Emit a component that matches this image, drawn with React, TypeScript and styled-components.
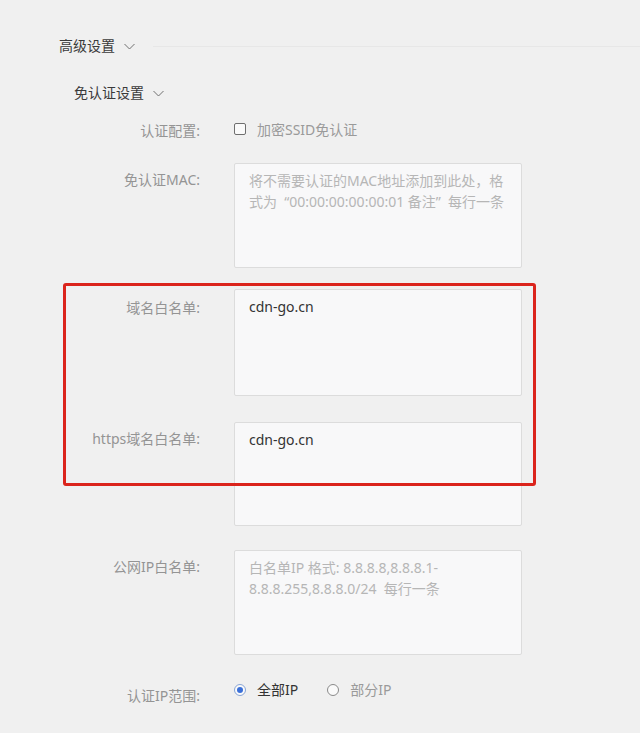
import React from "react";
import styled, { createGlobalStyle } from "styled-components";

const GlobalStyle = createGlobalStyle`
  html, body {
    margin: 0;
    padding: 0;
    background: #f0f0f0;
  }
  body {
    font-family: "Noto Sans", "Noto Sans CJK SC", sans-serif;
    font-size: 14px;
  }
  *, *::before, *::after { box-sizing: border-box; }
`;

const Page = styled.div`
  width: 640px;
  height: 733px;
  overflow: hidden;
  background: #f0f0f0;
  padding: 36px 0 0 59px;
`;

const SectionHeader = styled.div<{ $indent?: number; $top?: number }>`
  display: flex;
  align-items: center;
  height: 20px;
  margin-left: ${(p) => p.$indent ?? 0}px;
  margin-top: ${(p) => p.$top ?? 0}px;
  color: #3a3a3a;
  font-size: 14px;
  line-height: 20px;
`;

const HeaderTitle = styled.span`
  white-space: nowrap;
`;

const Chevron = styled.svg`
  margin-left: 9px;
  flex: none;
`;

const Rule = styled.div`
  flex: 1;
  height: 1px;
  margin-left: 18px;
  background: #e7e7e7;
`;

const Form = styled.div`
  display: flex;
  flex-direction: column;
  margin-top: 17px;
`;

const Row = styled.div<{ $top?: number }>`
  display: grid;
  grid-template-columns: 141px 288px;
  column-gap: 34px;
  align-items: start;
  margin-top: ${(p) => p.$top ?? 0}px;
`;

const Label = styled.div<{ $offset?: number }>`
  text-align: right;
  color: #949494;
  font-size: 14px;
  line-height: 20px;
  padding-top: ${(p) => p.$offset ?? 0}px;
  white-space: nowrap;
`;

const Inline = styled.label`
  display: flex;
  align-items: center;
  height: 20px;
  font-size: 14px;
  line-height: 20px;
`;

const CheckBox = styled.span`
  width: 12px;
  height: 12px;
  border: 1px solid #6f6f6f;
  border-radius: 2px;
  background: #fafafa;
  flex: none;
  margin-top: -2px;
`;

const OptionText = styled.span<{ $active?: boolean }>`
  margin-left: 11px;
  color: ${(p) => (p.$active ? "#333" : "#9a9a9a")};
  white-space: nowrap;
`;

const RadioGroup = styled.div`
  display: flex;
  align-items: center;
  gap: 29px;
  height: 20px;
`;

const Radio = styled.span<{ $checked?: boolean }>`
  width: 12px;
  height: 12px;
  border-radius: 50%;
  border: 1px solid ${(p) => (p.$checked ? "#8aa6d6" : "#8a8a8a")};
  background: #fafafa;
  display: flex;
  align-items: center;
  justify-content: center;
  flex: none;
  &::after {
    content: "";
    display: ${(p) => (p.$checked ? "block" : "none")};
    width: 6px;
    height: 6px;
    border-radius: 50%;
    background: #3a6fd8;
  }
`;

const TextArea = styled.textarea<{ $h?: number }>`
  display: block;
  width: 288px;
  height: ${(p) => p.$h ?? 105}px;
  margin: 0;
  padding: 6px 8px 6px 14px;
  border: 1px solid #dcdcdc;
  border-radius: 2px;
  background: #f8f8f9;
  color: #333;
  font-family: "Noto Sans", "Noto Sans CJK SC", sans-serif;
  font-size: 14px;
  line-height: 21px;
  resize: none;
  outline: none;
  overflow: hidden;
  &::placeholder {
    color: #b6b6b6;
  }
`;

const Highlight = styled.div<{ $top?: number }>`
  position: relative;
  display: flex;
  flex-direction: column;
  margin-top: ${(p) => p.$top ?? 0}px;
  &::after {
    content: "";
    position: absolute;
    top: -6px;
    left: 4px;
    width: 473px;
    height: 203px;
    border: 3px solid #db241c;
    border-radius: 3px;
    pointer-events: none;
  }
`;

const ChevronIcon = () => (
  <Chevron width="11" height="7" viewBox="0 0 11 7">
    <polyline
      points="0.5,1 5.5,6 10.5,1"
      fill="none"
      stroke="#707070"
      strokeWidth="1"
    />
  </Chevron>
);

export default function App() {
  return (
    <>
      <GlobalStyle />
      <Page>
        <SectionHeader>
          <HeaderTitle>高级设置</HeaderTitle>
          <ChevronIcon />
          <Rule />
        </SectionHeader>
        <SectionHeader $indent={15} $top={27}>
          <HeaderTitle>免认证设置</HeaderTitle>
          <ChevronIcon />
        </SectionHeader>
        <Form>
          <Row>
            <Label $offset={1}>认证配置:</Label>
            <Inline>
              <CheckBox />
              <OptionText>加密SSID免认证</OptionText>
            </Inline>
          </Row>
          <Row $top={22}>
            <Label $offset={7}>免认证MAC:</Label>
            <TextArea
              $h={105}
              placeholder={"将不需要认证的MAC地址添加到此处，格\n式为  “00:00:00:00:00:01 备注”  每行一条"}
            />
          </Row>
          <Highlight $top={21}>
            <Row>
              <Label $offset={9}>域名白名单:</Label>
              <TextArea $h={107} defaultValue="cdn-go.cn" />
            </Row>
            <Row $top={26}>
              <Label $offset={7}>https域名白名单:</Label>
              <TextArea $h={104} defaultValue="cdn-go.cn" />
            </Row>
          </Highlight>
          <Row $top={24}>
            <Label $offset={7}>公网IP白名单:</Label>
            <TextArea
              $h={105}
              placeholder={"白名单IP 格式: 8.8.8.8,8.8.8.1-\n8.8.8.255,8.8.8.0/24  每行一条"}
            />
          </Row>
          <Row $top={25}>
            <Label $offset={6}>认证IP范围:</Label>
            <RadioGroup>
              <Inline>
                <Radio $checked />
                <OptionText $active>全部IP</OptionText>
              </Inline>
              <Inline>
                <Radio />
                <OptionText>部分IP</OptionText>
              </Inline>
            </RadioGroup>
          </Row>
        </Form>
      </Page>
    </>
  );
}
